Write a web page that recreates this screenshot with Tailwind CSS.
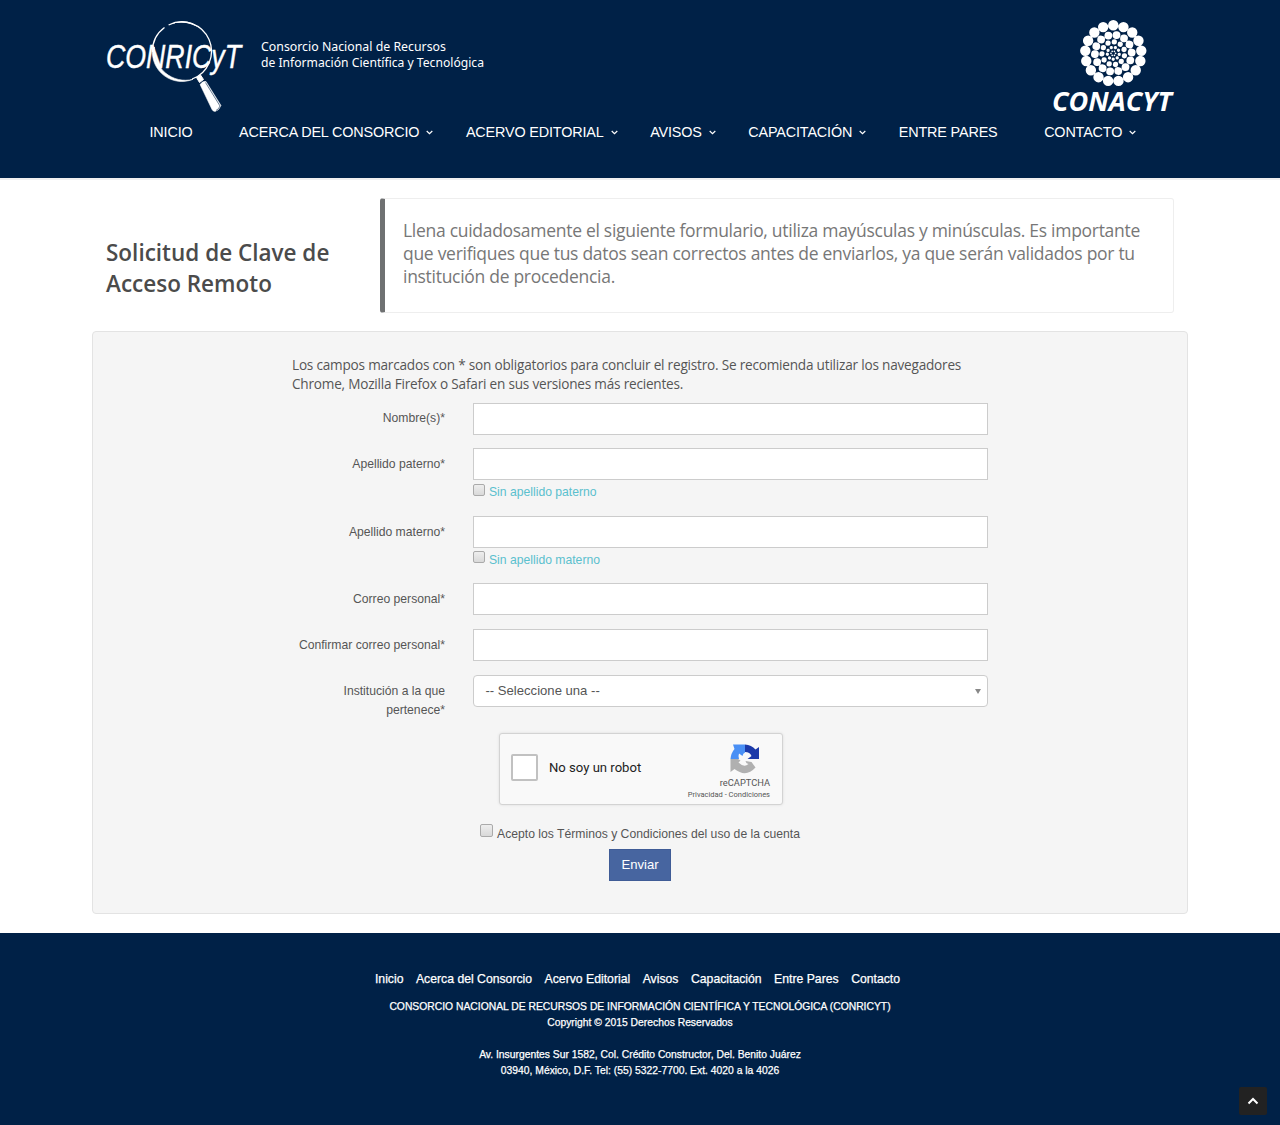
<!DOCTYPE html>
<html lang="es">
<head>
<meta charset="utf-8">
<title>CONRICYT - Solicitud de Clave de Acceso Remoto</title>
<script src="https://cdn.jsdelivr.net/npm/@tailwindcss/browser@4"></script>
</head>
<body class="w-[1280px] min-h-[1125px] flex flex-col bg-white text-[#555] font-['Liberation_Sans',Arial,sans-serif] overflow-x-hidden">

<svg class="hidden"><symbol id="chev" viewBox="0 0 7 5"><path d="M.7 1l2.800 2.600L6.300 1" fill="none" stroke="#fff" stroke-width="1.2"/></symbol></svg>

<header class="h-[178px] shrink-0 bg-[#002147]">
  <div class="w-[1068px] mx-auto flex justify-between pt-[19px]">
    <svg class="w-[385px] h-[95px] overflow-visible" viewBox="106 19 385 95" fill="none" stroke="#fff">
      <path d="M168.600 25A29.500 29.500 0 1 1 192.100 79" stroke-width="1.300"/>
      <path d="M164.500 27.500A29.500 29.500 0 0 0 152.500 52" stroke-width="1.300"/>
      <path d="M170 24Q188 17 200 28.500Q188 20 170 24Z" fill="#fff" stroke="none"/>
      <path d="M152.500 49A29.500 29.500 0 0 0 193 79.300A31 31 0 0 1 154.500 47Z" fill="#fff" stroke-width=".6"/>
      <path d="M196.500 77.500l4-2.500 3 4.500-4 3z" fill="#fff" stroke-width="1"/>
      <path d="M200 84.500q3-4 6-3l15 24q-2 5-6 6q-2 0-3-2z" fill="#fff" stroke-width=".5"/>
      <path d="M205.500 82.500l14.500 23.500q-1 3-4 4.500" stroke="#002147" stroke-width=".6"/>
      <g fill="#fff" stroke="none">
        <text x="106" y="68.300" font-family="Liberation Sans" font-style="italic" font-size="33" textLength="135" lengthAdjust="spacingAndGlyphs" stroke="#fff" stroke-width=".4">CONRICyT</text>
        <g font-family="Noto Sans" font-size="12" stroke="none">
          <text x="261" y="51" textLength="185" lengthAdjust="spacingAndGlyphs">Consorcio Nacional de Recursos</text>
          <text x="261" y="66.500" textLength="223" lengthAdjust="spacingAndGlyphs">de Información Científica y Tecnológica</text>
        </g>
      </g>
    </svg>
    <svg class="w-[128px] h-[95px] -mr-[5px] overflow-visible" viewBox="1051 19 128 95" fill="none" stroke="#fff" stroke-linecap="round">
      <circle cx="1113.300" cy="53.300" r="28.100" pathLength="17" stroke-dasharray="0 1" stroke-width="10.400" transform="rotate(-90 1113.300 53.300)"/>
      <circle cx="1113.300" cy="53.300" r="18.400" pathLength="14" stroke-dasharray="0 1" stroke-width="7.800" transform="rotate(-80 1113.300 53.300)"/>
      <circle cx="1113.300" cy="53.300" r="11.400" pathLength="11" stroke-dasharray="0 1" stroke-width="5.300" transform="rotate(-85 1113.300 53.300)"/>
      <circle cx="1113.300" cy="53.300" r="6" pathLength="9" stroke-dasharray="0 1" stroke-width="3.300" transform="rotate(-70 1113.300 53.300)"/>
      <circle cx="1113.300" cy="53.300" r="2.300" pathLength="6" stroke-dasharray="0 1" stroke-width="1.700"/>
      <text x="1052" y="111.300" fill="#fff" stroke="none" font-family="Open Sans" font-weight="700" font-style="italic" font-size="26.500" textLength="120" lengthAdjust="spacingAndGlyphs">CONACYT</text>
    </svg>
  </div>
  <nav class="flex gap-[46.600px] pl-[149.500px] mt-[9px] text-[14.400px] leading-[18px] tracking-[-0.160px] text-white whitespace-nowrap">
    <a>INICIO</a>
    <a class="flex items-center">ACERCA DEL CONSORCIO<svg class="w-[7px] h-[5px] ml-[7px] -mr-[14px]"><use href="#chev"/></svg></a>
    <a class="flex items-center">ACERVO EDITORIAL<svg class="w-[7px] h-[5px] ml-[7px] -mr-[14px]"><use href="#chev"/></svg></a>
    <a class="flex items-center">AVISOS<svg class="w-[7px] h-[5px] ml-[7px] -mr-[14px]"><use href="#chev"/></svg></a>
    <a class="flex items-center">CAPACITACIÓN<svg class="w-[7px] h-[5px] ml-[7px] -mr-[14px]"><use href="#chev"/></svg></a>
    <a>ENTRE PARES</a>
    <a class="flex items-center">CONTACTO<svg class="w-[7px] h-[5px] ml-[7px] -mr-[14px]"><use href="#chev"/></svg></a>
  </nav>
</header>
<div class="h-[2px] shrink-0 bg-[#f0f0f0]"></div>

<main class="w-[1096px] mx-auto pt-[18px] h-[753px] shrink-0">
  <div class="flex px-[14px]">
    <h1 class="w-[274px] shrink-0 pt-[39px] text-[22.500px] leading-[31px] font-semibold text-[#4b4b4b] font-['Open_Sans']">Solicitud de Clave de<br>Acceso Remoto</h1>
    <blockquote class="flex-1 h-[115px] border border-[#eee] border-l-[5px] border-l-[#6f7172] rounded-[3px] pl-[18px] pt-[19.500px] text-[17.500px] tracking-[-0.290px] leading-[23.400px] text-[#777] font-['Open_Sans'] whitespace-nowrap">Llena cuidadosamente el siguiente formulario, utiliza mayúsculas y minúsculas. Es importante<br>que verifiques que tus datos sean correctos antes de enviarlos, ya que serán validados por tu<br>institución de procedencia.</blockquote>
  </div>

  <form class="mt-[18px] h-[583px] border border-[#e3e3e3] rounded-[4px] bg-[#f5f5f5] pt-[24px] text-[12.180px]">
    <p class="ml-[199px] text-[13.600px] tracking-[-0.210px] leading-[18.700px] text-[#555] font-['Open_Sans'] whitespace-nowrap">Los campos marcados con * son obligatorios para concluir el registro. Se recomienda utilizar los navegadores<br>Chrome, Mozilla Firefox o Safari en sus versiones más recientes.</p>

    <div class="ml-[186px] mt-[9.200px] grid grid-cols-[167px_515px] gap-x-[27px] leading-[18.700px]">
      <label class="text-right pr-px pt-[6.500px] h-[45.800px]">Nombre(s)*</label>
      <div class="h-[32px] bg-white border border-[#ccc]"></div>

      <label class="text-right pr-px pt-[6.700px] h-[67.500px]">Apellido paterno*</label>
      <div>
        <div class="h-[32px] bg-white border border-[#ccc]"></div>
        <div class="flex gap-1 pt-[3px] text-[#5bc0ce]"><i class="w-[12px] h-[12px] mt-[.5px] rounded-[2px] border border-[#aaa] bg-linear-to-b from-[#eee] to-[#d9d9d9]"></i>Sin apellido paterno</div>
      </div>

      <label class="text-right pr-px pt-[6.700px] h-[67.500px]">Apellido materno*</label>
      <div>
        <div class="h-[32px] bg-white border border-[#ccc]"></div>
        <div class="flex gap-1 pt-[3px] text-[#5bc0ce]"><i class="w-[12px] h-[12px] mt-[.5px] rounded-[2px] border border-[#aaa] bg-linear-to-b from-[#eee] to-[#d9d9d9]"></i>Sin apellido materno</div>
      </div>

      <label class="text-right pr-px pt-[6.900px] h-[45.900px]">Correo personal*</label>
      <div class="h-[32px] bg-white border border-[#ccc]"></div>

      <label class="text-right pr-px pt-[6.900px] h-[45.900px]">Confirmar correo personal*</label>
      <div class="h-[32px] bg-white border border-[#ccc]"></div>

      <label class="text-right pr-px pt-[6.900px] h-[58.200px]">Institución a la que<br>pertenece*</label>
      <div class="h-[32px] flex items-center justify-between bg-white border border-[#ccc] rounded-[4px] pl-[11.500px] pr-[6px] text-[13.100px]">-- Seleccione una --<svg class="w-[6px] h-[5px]" viewBox="0 0 6 5"><path d="M0 0h6L3 5z" fill="#888"/></svg></div>
    </div>

    <div class="ml-[406px] w-[284px] h-[72px] flex justify-between border border-[#d3d3d3] rounded-[3px] bg-[#f9f9f9] shadow-[0_0_3px_rgba(0,0,0,0.1)] pl-[11px] pr-[12px] font-['Roboto']">
      <div class="flex items-center gap-[11px] text-[13.100px] text-[#222] pb-[3px]"><i class="w-[27px] h-[27px] bg-white border-2 border-[#c1c1c1] rounded-[2px]"></i>No soy un robot</div>
      <div class="flex flex-col items-end pt-[10px] text-[#555]">
        <svg class="w-[30px] h-[30px] mr-[10px]" viewBox="0 0 30 30">
          <path d="M15 .5v8q-2 .5-2.500 3.500L9 9.500Q8 12 9 15H0.500Q1 9 4.500 5L3 .5Z" fill="#4a90f5"/>
          <path d="M15 .5Q21.500 1 25.500 5.500L29 3v12H17.500l4-3Q20 8 15 8Z" fill="#1c3aa9"/>
          <path d="M.5 15H8l2.500 1.500-2 2Q14 24 18.500 20q-3-1-3-3l6 1 4 5.500Q16 34 4.500 25L.5 28Z" fill="#b0b0b0"/>
        </svg>
        <span class="text-[9.300px] leading-[12px] mt-[3px]">reCAPTCHA</span>
        <span class="text-[7.500px] leading-[11px]">Privacidad - Condiciones</span>
      </div>
    </div>

    <div class="flex justify-center gap-1 mt-[19px] leading-[20px]"><i class="w-[13px] h-[13px] rounded-[2px] border border-[#aaa] bg-linear-to-b from-[#eee] to-[#d9d9d9]"></i>Acepto los Términos y Condiciones del uso de la cuenta</div>
    <div class="mx-auto mt-[5px] w-[62px] h-[32px] bg-[#4765a0] border border-[#3f5c96] text-white text-[13.100px] leading-[30px] text-center">Enviar</div>
  </form>
</main>

<footer class="relative flex-1 bg-[#002147] text-white text-center pt-[37px] [-webkit-text-stroke:.25px_white]">
  <div class="flex justify-center gap-[12.500px] -ml-[5px] text-[12.220px] leading-[18px]">
    <a>Inicio</a><a>Acerca del Consorcio</a><a>Acervo Editorial</a><a>Avisos</a><a>Capacitación</a><a>Entre Pares</a><a>Contacto</a>
  </div>
  <p class="mt-[10.500px] text-[10.330px] leading-[16px]">CONSORCIO NACIONAL DE RECURSOS DE INFORMACIÓN CIENTÍFICA Y TECNOLÓGICA (CONRICYT)<br>Copyright © 2015 Derechos Reservados<br><br>Av. Insurgentes Sur 1582, Col. Crédito Constructor, Del. Benito Juárez<br>03940, México, D.F. Tel: (55) 5322-7700. Ext. 4020 a la 4026</p>
  <a class="absolute right-[13px] bottom-[10px] w-[28px] h-[28px] rounded-[2px] bg-[#222] flex items-center justify-center"><svg class="w-[12px] h-[8px]" viewBox="0 0 12 8"><path d="M1.500 6.500L6 2l4.500 4.500" fill="none" stroke="#fff" stroke-width="2"/></svg></a>
</footer>
</body>
</html>
